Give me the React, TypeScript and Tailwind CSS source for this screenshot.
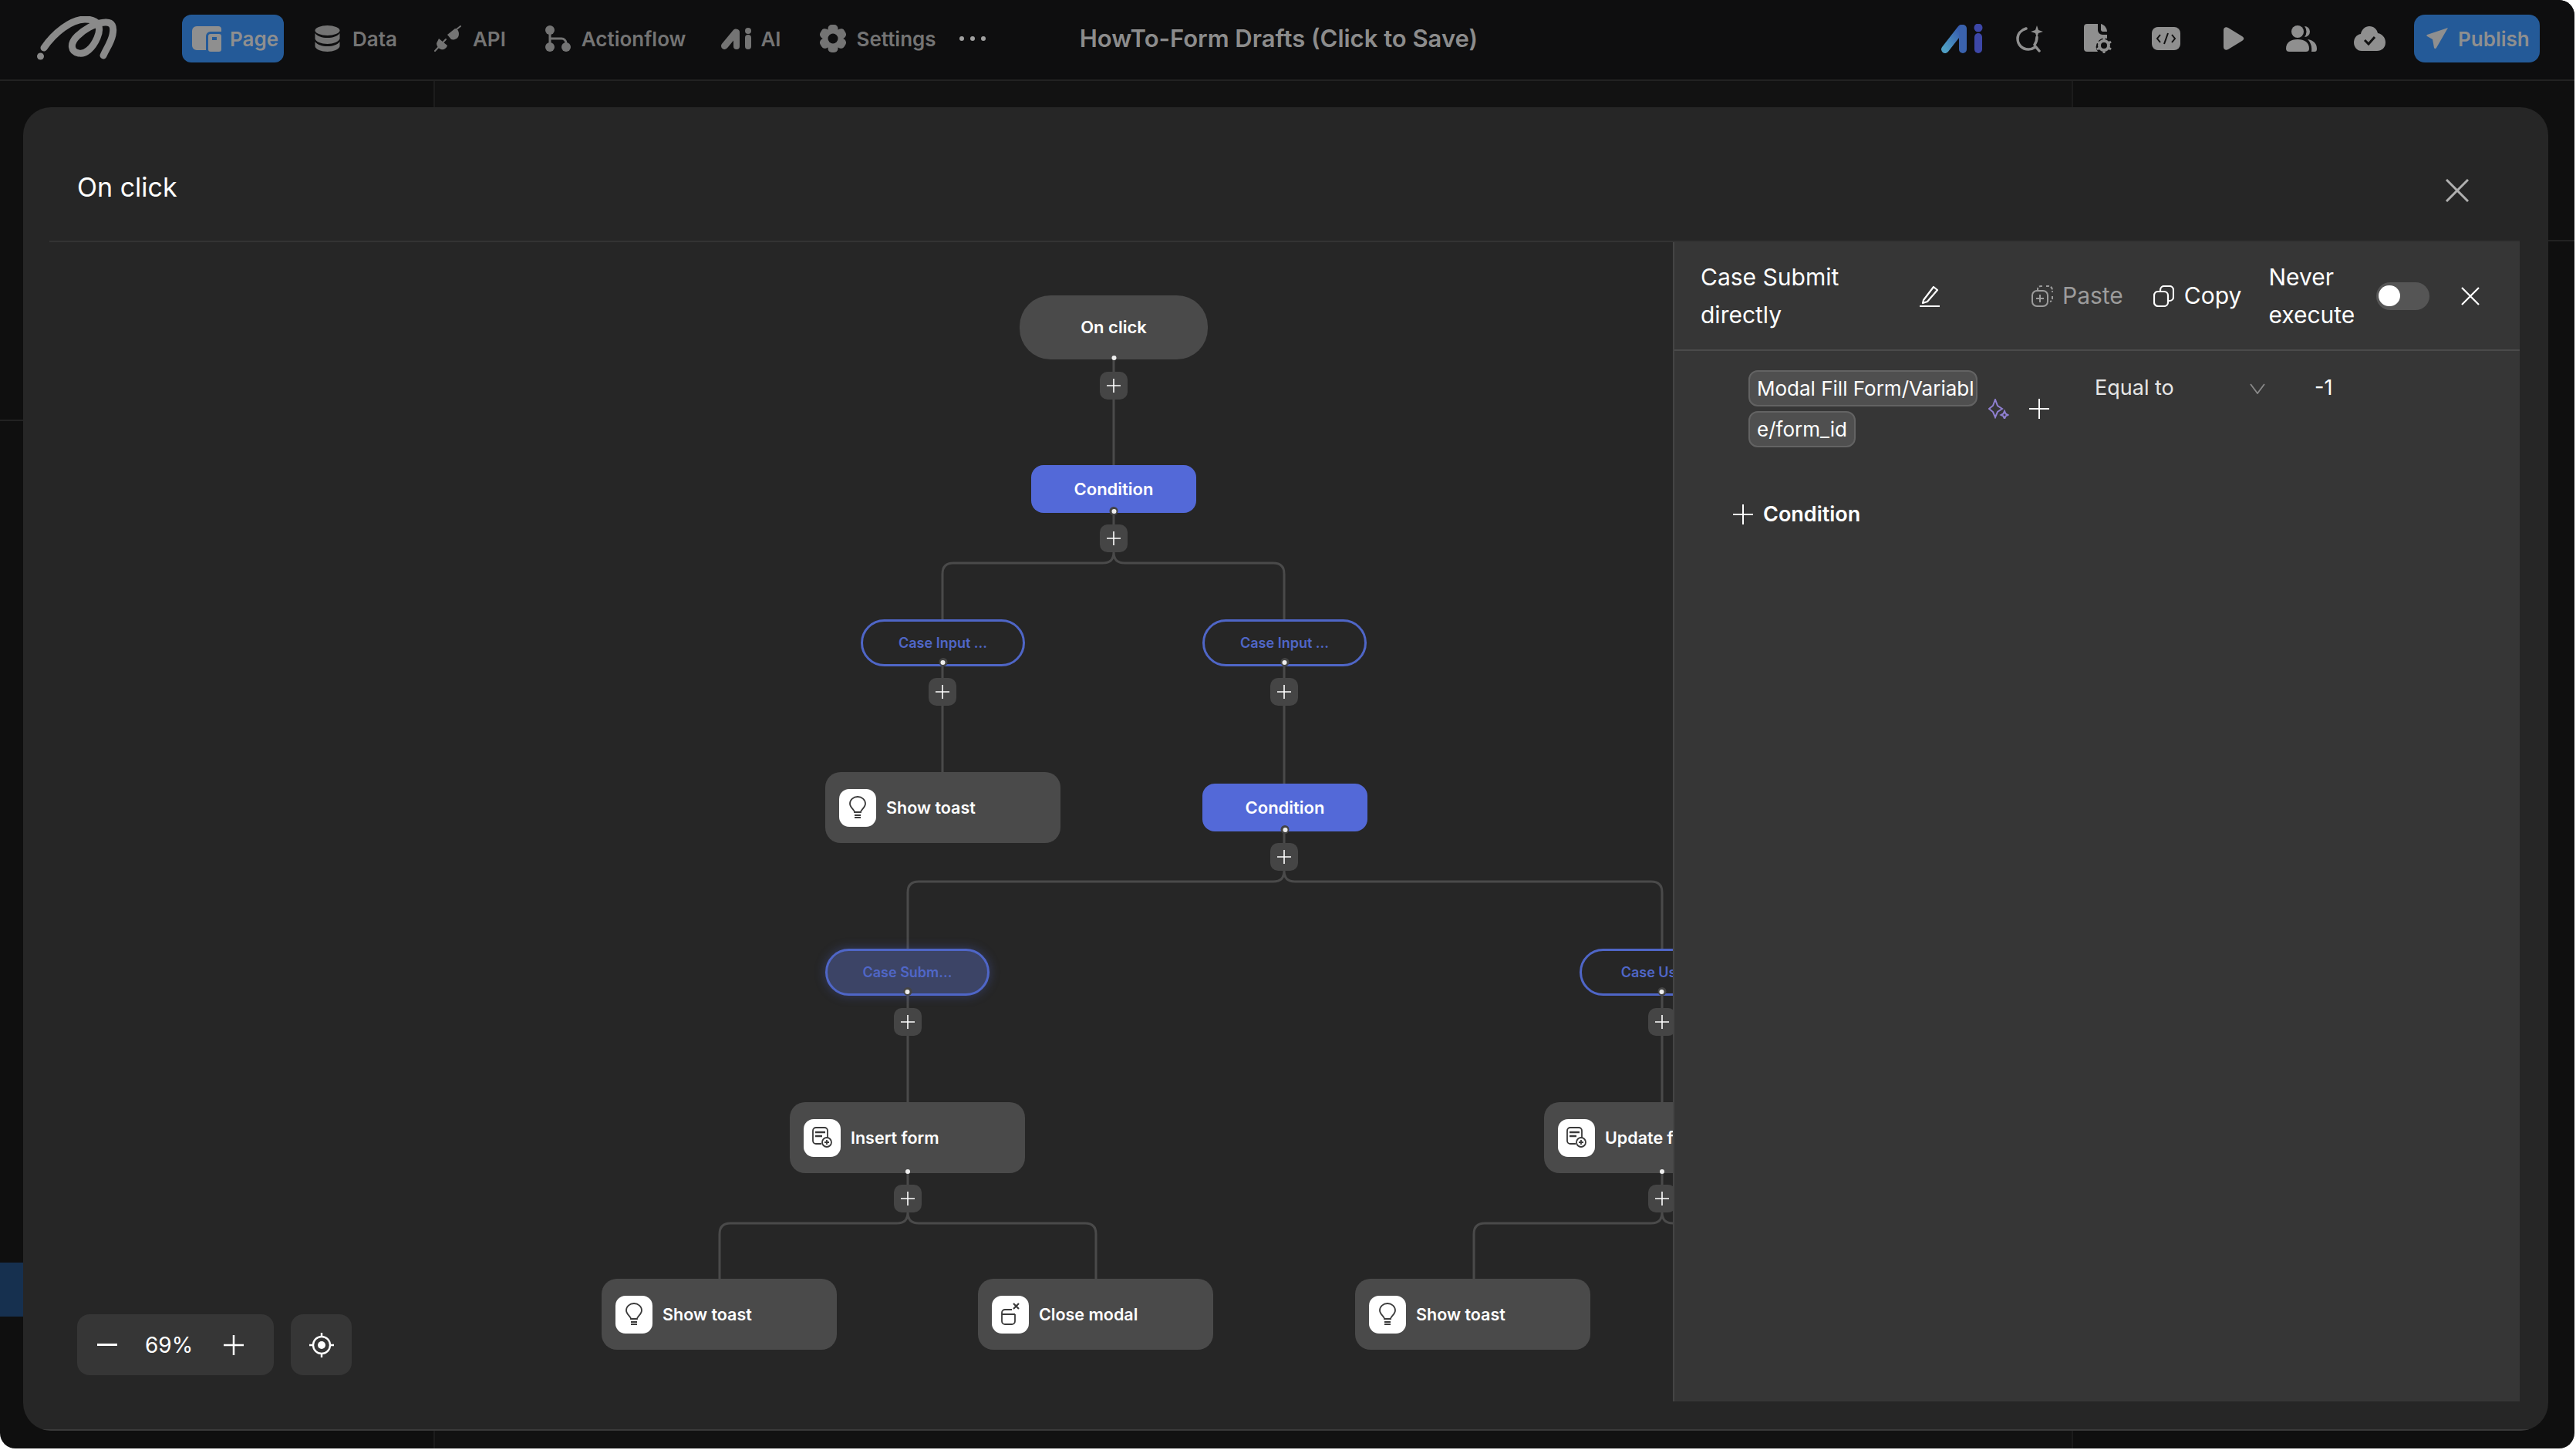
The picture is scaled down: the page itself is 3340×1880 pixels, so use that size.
import { ReactNode } from "react";

function Logo() {
  return (
    <svg width="104" height="58" viewBox="0 0 104 58" fill="none" stroke="#8a8a8a" strokeLinecap="round" strokeLinejoin="round">
      <circle cx="4.500" cy="52" r="4.500" fill="#8a8a8a" stroke="none" />
      <path d="M9 41C22 22 44 4 62 4c18 0 22 10 16 24-6 14-16 22-24 20-10-2-12-12-2-22 8-8 22-17 36-18 10-1 12 6 10 16-2 10-8 18-12 27" strokeWidth="9" />
    </svg>
  );
}

function PageIcon() {
  return (
    <svg width="38" height="34" viewBox="0 0 38 34" fill="#8f8f8f">
      <path d="M6 1h28a4 4 0 0 1 4 4v3H24a6 6 0 0 0-6 6v18H6a6 6 0 0 1-6-6V7a6 6 0 0 1 6-6Z" />
      <rect x="21" y="11" width="17" height="23" rx="3" />
      <rect x="26" y="15" width="6" height="4" fill="#245a98" />
    </svg>
  );
}

function DataIcon() {
  return (
    <svg width="33" height="34" viewBox="0 0 33 34" fill="#747474">
      <ellipse cx="16.500" cy="6.500" rx="16" ry="6.500" />
      <path d="M.5 10c3 4 9 6 16 6s13-2 16-6v7c-1 4-8 7-16 7S1 21 .5 17Z" />
      <path d="M.5 21c3 4 9 6 16 6s13-2 16-6v6c-1 4-8 7-16 7S1 31 .5 27Z" />
    </svg>
  );
}

function ApiIcon() {
  return (
    <svg width="36" height="34" viewBox="0 0 36 34" fill="#747474" stroke="#747474" strokeLinecap="round">
      <path d="M17 12 27 4c5 1 6 7 4 11-2 3-6 4-9 3Z" stroke="none" />
      <path d="M29 5l5-4M15 18 1 33" strokeWidth="2" />
      <path d="M6 17l11 9c-1 4-5 6-8 5-4-1-6-5-6-8Z" stroke="none" />
    </svg>
  );
}

function FlowIcon() {
  return (
    <svg width="35" height="34" viewBox="0 0 35 34" fill="#747474" stroke="#747474">
      <circle cx="7" cy="6" r="6" stroke="none" />
      <circle cx="7" cy="28" r="6" stroke="none" />
      <circle cx="28" cy="28" r="6" stroke="none" />
      <path d="M7 10v14M7 17h15a6 6 0 0 1 6 6" fill="none" strokeWidth="3" />
    </svg>
  );
}

function AiIcon() {
  return (
    <svg width="40" height="28" viewBox="0 0 40 28" fill="none" stroke="#747474" strokeLinecap="round">
      <path d="M4.500 23.500 19 6" strokeWidth="9" />
      <path d="M20 6v18" strokeWidth="8" />
      <path d="M35 13v11" strokeWidth="8" />
      <circle cx="35" cy="4" r="4" fill="#747474" stroke="none" />
    </svg>
  );
}

function GearIcon() {
  return (
    <svg width="36" height="36" viewBox="-18 -18 36 36" fill="#747474">
      <rect x="-6.500" y="-18" width="13" height="36" rx="5" />
      <rect x="-6.500" y="-18" width="13" height="36" rx="5" transform="rotate(60)" />
      <rect x="-6.500" y="-18" width="13" height="36" rx="5" transform="rotate(120)" />
      <circle r="13" />
      <circle r="6.500" fill="#0e0e0f" />
    </svg>
  );
}

function SearchStarIcon() {
  return (
    <svg width="36" height="36" viewBox="0 0 36 36" fill="none" stroke="#8f8f8f" strokeWidth="3.500" strokeLinecap="round">
      <path d="M13 5C6 7 2 12 2 18c0 8 6 14 14 14 3 0 6-1 9-3M25 28l5 6M27 16c0 3-1 7-3 10" />
      <path d="M27 1l2 6 6 2-6 2-2 6-2-6-6-2 6-2Z" fill="#8f8f8f" stroke="none" />
    </svg>
  );
}

function FileGearIcon() {
  return (
    <svg width="36" height="38" viewBox="0 0 36 38" fill="#8f8f8f">
      <path d="M4 0h14v8a6 6 0 0 0 6 6h6v5a11 11 0 0 0-12 17H4a4 4 0 0 1-4-4V4a4 4 0 0 1 4-4Z" />
      <path d="M22 0c4 1 8 5 8 10h-6a3 3 0 0 1-2-2Z" />
      <circle cx="26" cy="28" r="6" fill="none" stroke="#8f8f8f" strokeWidth="4" />
      <path d="M26 18v3M26 35v3M17 23l3 2M32 31l3 2M17 33l3-2M32 25l3-2" stroke="#8f8f8f" strokeWidth="3" />
    </svg>
  );
}

function CodeIcon() {
  return (
    <svg width="37" height="30" viewBox="0 0 37 30">
      <rect width="37" height="30" rx="8" fill="#8f8f8f" />
      <path d="M11 10l-4 5 4 5M26 10l4 5-4 5M21 8l-5 14" fill="none" stroke="#111" strokeWidth="2" />
    </svg>
  );
}

function PlayIcon() {
  return (
    <svg width="27" height="30" viewBox="0 0 27 30" fill="#8f8f8f">
      <path d="M0 4c0-3 3-5 6-3l18 11c3 2 3 4 0 6L6 29c-3 2-6 0-6-3Z" />
    </svg>
  );
}

function UsersIcon() {
  return (
    <svg width="40" height="34" viewBox="0 0 40 34" fill="#8f8f8f">
      <circle cx="15" cy="8" r="8" />
      <path d="M0 30c0-8 6-12 15-12s15 4 15 12c0 3-2 4-4 4H4c-2 0-4-1-4-4Z" />
      <path d="M24 1a7 7 0 0 1 0 14 11 11 0 0 0 0-14ZM28 18c7 1 12 5 12 12 0 3-1 4-3 4h-4c1-6-1-12-5-16Z" />
    </svg>
  );
}

function CloudIcon() {
  return (
    <svg width="41" height="32" viewBox="0 0 41 32">
      <path d="M20 0c6 0 10 4 11 9 6 1 10 6 10 12 0 7-5 11-11 11H10C4 32 0 27 0 21c0-5 3-10 9-11 1-6 6-10 11-10Z" fill="#8f8f8f" />
      <path d="M14 18l5 5 8-9" fill="none" stroke="#111" strokeWidth="3" />
    </svg>
  );
}

function SendIcon() {
  return (
    <svg width="29" height="28" viewBox="0 0 29 28" fill="#8f8f8f">
      <path d="M28 0 1 9c-1 .5-1 1.500 0 2l7 4 2 11c.5 1.500 2 1.500 3 0Z" />
    </svg>
  );
}

function NavItem({ icon, label, className }: { icon: ReactNode; label: string; className: string }) {
  return (
    <div className={`flex items-center ${className}`}>
      {icon}
      <span className="text-[26px] font-semibold text-[#747474]">{label}</span>
    </div>
  );
}

function Dot({ dark }: { dark?: boolean }) {
  return (
    <span className={`absolute bottom-[-3px] left-1/2 flex h-[11px] w-[11px] -translate-x-1/2 items-center justify-center rounded-full ${dark ? "bg-[#444]" : ""}`}>
      <span className="h-[6px] w-[6px] rounded-full bg-[#eee]" />
    </span>
  );
}

function AddButton({ className }: { className: string }) {
  return (
    <div className={`absolute flex h-[36px] w-[36px] items-center justify-center rounded-[10px] bg-[#454545] ${className}`}>
      <svg width="18" height="18" viewBox="0 0 18 18" stroke="#fff" strokeWidth="1.600">
        <path d="M9 0v18M0 9h18" />
      </svg>
    </div>
  );
}

function ConditionNode({ className }: { className: string }) {
  return (
    <div className={`absolute flex h-[62px] w-[214px] items-center justify-center rounded-[16px] bg-[#5369d8] text-[22px] font-semibold text-white ${className}`}>
      Condition
      <Dot dark />
    </div>
  );
}

function CaseNode({ label, className }: { label: string; className: string }) {
  return (
    <div className={`absolute flex h-[61px] w-[213px] items-center justify-center rounded-full border-[3px] border-[#4f66c7] text-[18px] font-semibold whitespace-nowrap text-[#5067c8] ${className}`}>
      {label}
      <Dot dark />
    </div>
  );
}

function BulbGlyph() {
  return (
    <svg width="22" height="30" viewBox="0 0 22 30" fill="none" stroke="#3a3a3a" strokeWidth="1.800">
      <path d="M7 21c0-3-6-6-6-11a10 9 0 0 1 20 0c0 5-6 8-6 11Z" />
      <path d="M7 25h8M7 28h8" />
    </svg>
  );
}

function FormGlyph() {
  return (
    <svg width="26" height="28" viewBox="0 0 26 28" fill="none" stroke="#3a3a3a" strokeWidth="1.800">
      <path d="M12 22H5a4 4 0 0 1-4-4V5a4 4 0 0 1 4-4h11a4 4 0 0 1 4 4v9" />
      <path d="M4 7h13M4 12h9" strokeWidth="2.400" />
      <circle cx="19" cy="20" r="6" />
      <path d="M19 17v6M16 20h6" />
    </svg>
  );
}

function CloseModalGlyph() {
  return (
    <svg width="24" height="30" viewBox="0 0 24 30" fill="none" stroke="#3a3a3a" strokeWidth="1.800">
      <path d="M14 9H5a4 4 0 0 0-4 4v11a4 4 0 0 0 4 4h9a4 4 0 0 0 4-4v-9M1 15h17" />
      <path d="M16 1l7 7M23 1l-7 7" strokeWidth="2.200" />
    </svg>
  );
}

function ActionNode({ icon, label, className }: { icon: ReactNode; label: string; className: string }) {
  return (
    <div className={`absolute flex h-[92px] w-[305px] items-center gap-[13px] rounded-[20px] bg-[#4a4a4a] pl-[18px] text-[21.5px] font-semibold whitespace-nowrap text-white ${className}`}>
      <span className="flex h-[49px] w-[48px] items-center justify-center rounded-[13px] bg-white">{icon}</span>
      {label}
    </div>
  );
}

function Canvas() {
  return (
    <div className="relative min-w-0 flex-1 overflow-hidden">
      <svg className="absolute inset-0 h-full w-full" fill="none" stroke="#4a4a4a" strokeWidth="3">
        <path d="M1380 152V289M1380 351V366" />
        <path d="M1380 402q0 14-14 14H1172q-14 0-14 14V489M1380 402q0 14 14 14H1587q14 0 14 14V489" />
        <path d="M1158 550V687M1601 550V702M1601 764V779" />
        <path d="M1601 815q0 14-14 14H1127q-14 0-14 14V916M1601 815q0 14 14 14H2077q14 0 14 14V916" />
        <path d="M1113 977V1115M1113 1207V1222M2091 977V1115M2091 1207V1222" />
        <path d="M1113 1258q0 14-14 14H883q-14 0-14 14V1344M1113 1258q0 14 14 14H1343q14 0 14 14V1344" />
        <path d="M2091 1258q0 14-14 14H1861q-14 0-14 14V1344M2091 1258q0 14 14 14H2321" />
      </svg>

      <div className="absolute top-[69px] left-[1258px] flex h-[83px] w-[244px] items-center justify-center rounded-[40px] bg-[#4a4a4a] text-[22px] font-semibold text-white">
        On click
        <Dot />
      </div>
      <AddButton className="top-[168px] left-[1362px]" />
      <ConditionNode className="top-[289px] left-[1273px]" />
      <AddButton className="top-[366px] left-[1362px]" />

      <CaseNode label="Case Input ..." className="top-[489px] left-[1052px]" />
      <CaseNode label="Case Input ..." className="top-[489px] left-[1495px]" />
      <AddButton className="top-[565px] left-[1140px]" />
      <AddButton className="top-[565px] left-[1583px]" />

      <ActionNode icon={<BulbGlyph />} label="Show toast" className="top-[687px] left-[1006px]" />
      <ConditionNode className="top-[702px] left-[1495px]" />
      <AddButton className="top-[779px] left-[1583px]" />

      <CaseNode label="Case Subm..." className="top-[916px] left-[1006px] bg-[#3c4466] shadow-[0_0_14px_rgba(83,105,216,0.35)]" />
      <CaseNode label="Case User..." className="top-[916px] left-[1984px]" />
      <AddButton className="top-[993px] left-[1095px]" />
      <AddButton className="top-[993px] left-[2073px]" />

      <ActionNode icon={<FormGlyph />} label="Insert form" className="top-[1115px] left-[960px]" />
      <ActionNode icon={<FormGlyph />} label="Update form" className="top-[1115px] left-[1938px]" />
      <span className="absolute top-[1202px] left-[1110px] h-[6px] w-[6px] rounded-full bg-[#eee]" />
      <span className="absolute top-[1202px] left-[2088px] h-[6px] w-[6px] rounded-full bg-[#eee]" />
      <AddButton className="top-[1222px] left-[1095px]" />
      <AddButton className="top-[1222px] left-[2073px]" />

      <ActionNode icon={<BulbGlyph />} label="Show toast" className="top-[1344px] left-[716px]" />
      <ActionNode icon={<CloseModalGlyph />} label="Close modal" className="top-[1344px] left-[1204px]" />
      <ActionNode icon={<BulbGlyph />} label="Show toast" className="top-[1344px] left-[1693px]" />

      <div className="absolute top-[1390px] left-[36px] flex items-center gap-[22px]">
        <div className="flex h-[79px] w-[255px] items-center rounded-[16px] bg-[#363636] pl-[26px] text-[28px] text-white">
          <svg width="26" height="3" viewBox="0 0 26 3" fill="#fff">
            <rect width="26" height="3" />
          </svg>
          <span className="ml-[36px] w-[66px]">69%</span>
          <svg className="ml-[36px]" width="26" height="26" viewBox="0 0 26 26" stroke="#fff" strokeWidth="2.500">
            <path d="M13 0v26M0 13h26" />
          </svg>
        </div>
        <div className="flex h-[79px] w-[79px] items-center justify-center rounded-[16px] bg-[#363636]">
          <svg width="32" height="32" viewBox="0 0 32 32" fill="none" stroke="#fff" strokeWidth="2.400">
            <circle cx="16" cy="16" r="11" />
            <circle cx="16" cy="16" r="5" fill="#fff" stroke="none" />
            <path d="M16 0v6M16 26v6M0 16h6M26 16h6" />
          </svg>
        </div>
      </div>
    </div>
  );
}

function Panel() {
  return (
    <aside className="flex w-[1098px] shrink-0 flex-col border-l-2 border-[#444] bg-[#363636] text-white">
      <div className="flex h-[141px] items-center border-b-2 border-[#4a4a4a] pl-[34px] text-[30px] leading-[49px]">
        <div className="w-[283px]">
          Case Submit
          <br />
          directly
        </div>
        <svg width="28" height="28" viewBox="0 0 28 28" fill="none" stroke="#fff" strokeWidth="2.200" strokeLinejoin="round">
          <path d="M6 19 19 2l5 4-13 15-6 2ZM1 27h26" />
        </svg>
        <div className="ml-[118px] flex items-center gap-[12px] text-[#9c9c9c]">
          <svg width="28" height="28" viewBox="0 0 28 28" fill="none" stroke="#9c9c9c" strokeWidth="2">
            <path d="M8 7V5a4 4 0 0 1 4-4h2M19 1h3a5 5 0 0 1 5 5v3M27 14v3a4 4 0 0 1-3 4" strokeDasharray="4 2" />
            <rect x="1" y="7" width="20" height="20" rx="6" />
            <path d="M11 12v10M6 17h10" />
          </svg>
          Paste
        </div>
        <div className="ml-[39px] flex items-center gap-[13px]">
          <svg width="27" height="28" viewBox="0 0 27 28" fill="none" stroke="#fff" strokeWidth="2.200">
            <path d="M9 8V6a5 5 0 0 1 5-5h7a5 5 0 0 1 5 5v9a5 5 0 0 1-5 5h-2" />
            <rect x="1" y="8" width="18" height="19" rx="5" />
          </svg>
          Copy
        </div>
        <div className="ml-[35px] w-[140px]">
          Never
          <br />
          execute
        </div>
        <div className="flex h-[36px] w-[69px] items-center rounded-full bg-[#555] pl-[3px]">
          <span className="h-[27px] w-[28px] rounded-full bg-white" />
        </div>
        <svg className="ml-[41px]" width="24" height="24" viewBox="0 0 24 24" stroke="#fff" strokeWidth="2.200">
          <path d="M1 1l22 22M23 1 1 23" />
        </svg>
      </div>

      <div className="flex items-start pt-[25px] pl-[96px] text-[27px]">
        <div className="flex w-[297px] flex-col items-start gap-[6px] text-[26px]">
          <span className="flex h-[47px] w-full items-center rounded-[12px] border-2 border-[#636363] bg-[#4f4f4f] pl-[9px] whitespace-nowrap">Modal Fill Form/Variabl</span>
          <span className="flex h-[47px] items-center rounded-[12px] border-2 border-[#636363] bg-[#4f4f4f] px-[9px]">e/form_id</span>
        </div>
        <div className="ml-[14px] flex h-[100px] items-center gap-[25px]">
          <svg width="27" height="26" viewBox="0 0 27 26" fill="none" stroke="#8f7fd0" strokeWidth="2">
            <path d="M9 1l3 8 6 4-6 4-3 7-3-7-5-4 5-4ZM21 16l1.500 3.500 3 1.500-3 1.500L21 26l-1.500-3.500-3-1.500 3-1.500Z" />
          </svg>
          <svg width="28" height="26" viewBox="0 0 28 26" stroke="#fff" strokeWidth="2">
            <path d="M14 0v26M1 13h26" />
          </svg>
        </div>
        <div className="ml-[58px] flex h-[47px] w-[201px] items-center text-[#e6e6e6]">Equal to</div>
        <div className="flex h-[47px] items-center">
          <svg width="20" height="14" viewBox="0 0 20 14" fill="none" stroke="#8a8a8a" strokeWidth="1.800">
            <path d="M1 1l9 12 9-12" />
          </svg>
        </div>
        <div className="ml-[64px] flex h-[47px] items-center">-1</div>
      </div>

      <div className="mt-[67px] flex items-center gap-[13px] pl-[76px] text-[27px] font-semibold">
        <svg width="26" height="26" viewBox="0 0 26 26" stroke="#fff" strokeWidth="2">
          <path d="M13 0v26M0 13h26" />
        </svg>
        Condition
      </div>
    </aside>
  );
}

function Modal() {
  return (
    <div className="absolute top-[139px] left-[30px] flex h-[1716px] w-[3274px] flex-col overflow-hidden rounded-[36px] bg-[#262626] pr-[37px] pb-[38px] pl-[34px]">
      <header className="flex h-[175px] shrink-0 items-center justify-between border-b-2 border-[#333] pt-[34px] pr-[66px] pl-[36px]">
        <h1 className="text-[34px] text-white">On click</h1>
        <svg className="mt-[8px]" width="30" height="30" viewBox="0 0 30 30" stroke="#b0b0b0" strokeWidth="3">
          <path d="M1 1l28 28M29 1 1 29" />
        </svg>
      </header>
      <div className="flex min-h-0 flex-1">
        <Canvas />
        <Panel />
      </div>
      <div className="absolute right-0 bottom-0 left-0 h-[2px] bg-[#3a3a3a]" />
    </div>
  );
}

export default function App() {
  return (
    <div className="h-[1880px] w-[3340px] overflow-hidden bg-white font-['Inter',sans-serif]">
      <div className="relative flex h-[1878px] w-[3338px] flex-col overflow-hidden rounded-tr-[20px] rounded-b-[20px] bg-[#0f0f0f]">
        <nav className="flex h-[105px] shrink-0 items-center border-b-2 border-[#222] bg-[#0e0e0f] pb-[3px] pl-[48px]">
          <Logo />
          <div className="ml-[84px] flex h-[62px] w-[132px] items-center gap-[11px] rounded-[12px] bg-[#245a98] pl-[13px] text-[26px] font-semibold text-[#8f8f8f]">
            <PageIcon />
            Page
          </div>
          <NavItem icon={<DataIcon />} label="Data" className="ml-[40px] gap-[16px]" />
          <NavItem icon={<ApiIcon />} label="API" className="ml-[48px] gap-[14px]" />
          <NavItem icon={<FlowIcon />} label="Actionflow" className="ml-[50px] gap-[13px]" />
          <NavItem icon={<AiIcon />} label="AI" className="ml-[46px] gap-[11px]" />
          <NavItem icon={<GearIcon />} label="Settings" className="ml-[49px] gap-[13px]" />
          <div className="ml-[30px] flex w-[34px] justify-between">
            <span className="h-[6px] w-[6px] rounded-full bg-[#a0a0a0]" />
            <span className="h-[6px] w-[6px] rounded-full bg-[#a0a0a0]" />
            <span className="h-[6px] w-[6px] rounded-full bg-[#a0a0a0]" />
          </div>
          <div className="ml-[122px] text-[31px] font-semibold text-[#8c8c8c]">HowTo-Form Drafts (Click to Save)</div>
          <div className="ml-auto flex items-center pr-[45px]">
            <div className="flex w-[88px] justify-center">
              <svg width="56" height="38" viewBox="0 0 56 38" fill="none" strokeLinecap="round">
                <defs>
                  <linearGradient id="aiBlue" x1="0" y1="1" x2="1" y2="0">
                    <stop offset="0" stopColor="#4f9fc4" />
                    <stop offset="1" stopColor="#3558b0" />
                  </linearGradient>
                </defs>
                <path d="M6 33 27 6" stroke="url(#aiBlue)" strokeWidth="10" />
                <path d="M29 6v27" stroke="#3a62ad" strokeWidth="10" />
                <path d="M49 17v16" stroke="#3d47a8" strokeWidth="10" />
                <circle cx="49" cy="5" r="5.500" fill="#3d47a8" />
              </svg>
            </div>
            <div className="flex w-[88px] justify-center"><SearchStarIcon /></div>
            <div className="flex w-[88px] justify-center"><FileGearIcon /></div>
            <div className="flex w-[88px] justify-center"><CodeIcon /></div>
            <div className="flex w-[88px] justify-center"><PlayIcon /></div>
            <div className="flex w-[88px] justify-center"><UsersIcon /></div>
            <div className="flex w-[88px] justify-center"><CloudIcon /></div>
            <div className="ml-[14px] flex h-[62px] w-[163px] items-center gap-[12px] rounded-[14px] bg-[#245a98] pl-[16px] text-[26px] font-semibold text-[#8f8f8f]">
              <SendIcon />
              Publish
            </div>
          </div>
        </nav>

        <main className="flex min-h-0 flex-1">
          <div className="w-[564px] border-r-2 border-[#1c1c1c]">
            <div className="h-[441px] border-b-2 border-[#222]" />
            <div className="mt-[1091px] h-[70px] bg-[#16304f]" />
          </div>
          <div className="flex-1 bg-[#121212]" />
          <div className="w-[652px] border-l-2 border-[#1c1c1c]">
            <div className="h-[208px] border-b-2 border-[#222]" />
          </div>
        </main>

        <Modal />
      </div>
    </div>
  );
}
